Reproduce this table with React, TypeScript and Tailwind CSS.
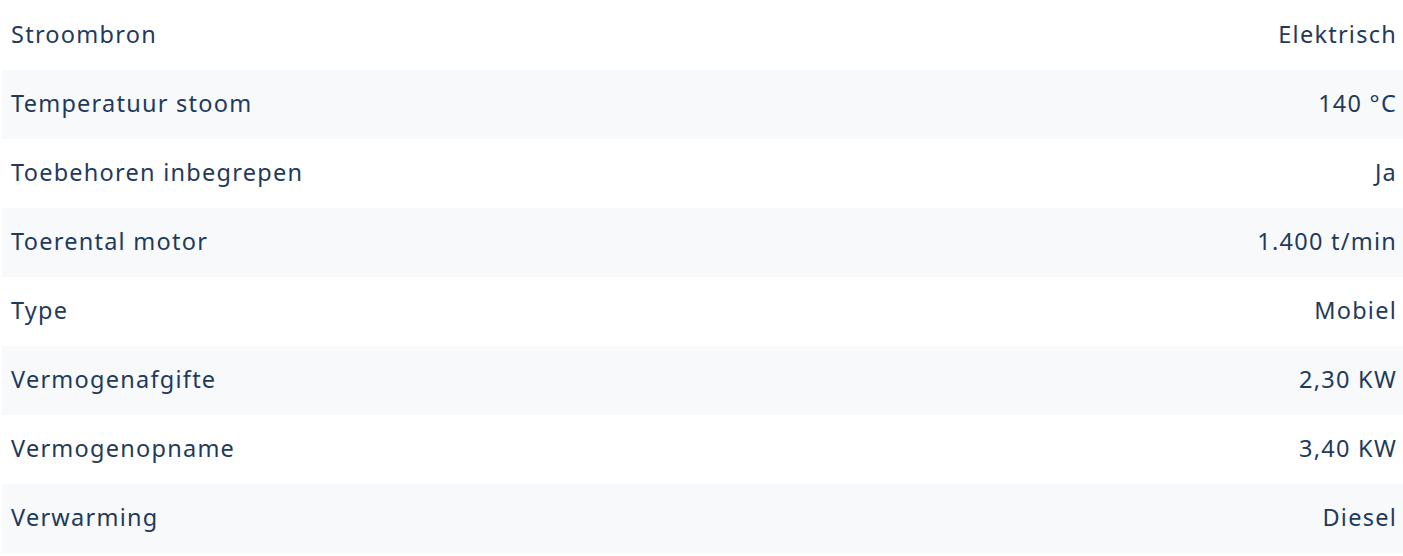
const rows: [string, string][] = [
  ["Stroombron", "Elektrisch"],
  ["Temperatuur stoom", "140 °C"],
  ["Toebehoren inbegrepen", "Ja"],
  ["Toerental motor", "1.400 t/min"],
  ["Type", "Mobiel"],
  ["Vermogenafgifte", "2,30 KW"],
  ["Vermogenopname", "3,40 KW"],
  ["Verwarming", "Diesel"],
];

export default function App() {
  return (
    <div className="w-[1403px] h-[556px] bg-white pt-px pl-[2px]">
      <div className="flex flex-col">
        {rows.map(([k, v], i) => (
          <div
            key={k}
            className={`flex h-[69px] items-center justify-between pb-[2px] pl-[9px] pr-[7px] text-[23.5px] tracking-[1.25px] text-[#1f3a5c] ${
              i % 2 === 1 ? "bg-[#f8f9fb]" : "bg-white"
            }`}
            style={{ fontFamily: '"Noto Sans", sans-serif' }}
          >
            <span>{k}</span>
            <span className="-mr-px">{v}</span>
          </div>
        ))}
      </div>
    </div>
  );
}
